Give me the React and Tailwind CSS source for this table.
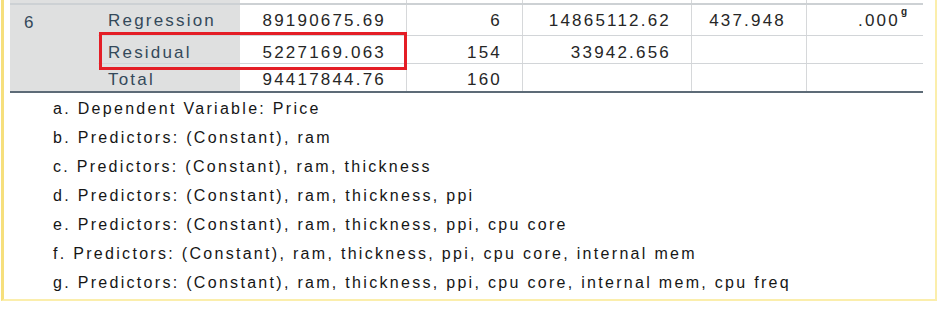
export default function App() {
    const cols = 'flex items-center justify-end pr-[20px] border-r border-[#d6d8da] text-[#262626]';
    const rows = [
        { label: 'Regression', ss: '89190675.69', df: '6', ms: '14865112.62', f: '437.948', sig: '.000', h: 'h-[31px]', pad: 'pt-[2px]' },
        { label: 'Residual', ss: '5227169.063', df: '154', ms: '33942.656', f: '', sig: '', h: 'h-[28px]', pad: 'pt-[6px]' },
        { label: 'Total', ss: '94417844.76', df: '160', ms: '', f: '', sig: '', h: 'h-[27px]', pad: 'pt-[4px]' },
    ];
    const notes = [
        'a. Dependent Variable: Price',
        'b. Predictors: (Constant), ram',
        'c. Predictors: (Constant), ram, thickness',
        'd. Predictors: (Constant), ram, thickness, ppi',
        'e. Predictors: (Constant), ram, thickness, ppi, cpu core',
        'f. Predictors: (Constant), ram, thickness, ppi, cpu core, internal mem',
        'g. Predictors: (Constant), ram, thickness, ppi, cpu core, internal mem, cpu freq',
    ];

    return (
        <div className="w-[939px] h-[316px] bg-white" style={{ fontFamily: '"Liberation Sans", Arial, sans-serif' }}>
            <div className="ml-[1px] w-[936px] h-[301px] border-l-[3px] border-r-2 border-b-2 border-l-[#f6df7c] border-r-[#fbeeac] border-b-[#fbeeac]">
                <div className="relative ml-[6px] w-[913px] text-[17px] tracking-[2.2px]">
                    {/* stub of the row above */}
                    <div className="flex h-[5px] border-b-2 border-[#cdd1d4]">
                        <div className="w-[230px] bg-[#dfe0e0]" />
                        <div className="w-[167px] border-r border-[#d6d8da]" />
                        <div className="w-[116px] border-r border-[#d6d8da]" />
                        <div className="w-[169px] border-r border-[#d6d8da]" />
                        <div className="w-[115px] border-r border-[#d6d8da]" />
                        <div className="w-[116px]" />
                    </div>

                    <div className="flex">
                        <div className="w-[88px] bg-[#dfe0e0] pl-[14px] pt-[5px] text-[#34495a]">6</div>
                        <div className="flex-1">
                            {rows.map((r, i) => (
                                <div key={r.label} className={`flex ${r.h} ${i < 2 ? 'border-b border-[#d2d5d8]' : ''}`}>
                                    <div className={`w-[142px] bg-[#dfe0e0] flex items-center pl-[10px] text-[#34495a] ${r.pad}`}>{r.label}</div>
                                    <div className={`w-[167px] ${cols} ${r.pad}`}>{r.ss}</div>
                                    <div className={`w-[116px] ${cols} ${r.pad}`}>{r.df}</div>
                                    <div className={`w-[169px] ${cols} ${r.pad}`}>{r.ms}</div>
                                    <div className={`w-[115px] ${cols} ${r.pad}`}>{r.f}</div>
                                    <div className={`w-[116px] flex items-center justify-end pr-[16px] text-[#262626] ${r.pad}`}>
                                        {r.sig}
                                        {r.sig && <sup className="text-[10px] font-bold tracking-normal -mt-[8px] ml-[1px]">g</sup>}
                                    </div>
                                </div>
                            ))}
                        </div>
                    </div>
                    <div className="h-[2px] bg-[#5d6b77]" />

                    <div className="absolute left-[89px] top-[32px] w-[308px] h-[38px] border-[3px] border-[#e41e26]" />
                </div>

                <div className="pl-[49px] pt-[1px] text-[16px] tracking-[2.3px] text-[#161616]">
                    {notes.map((n) => (
                        <div key={n} className="h-[29px] leading-[29px]">{n}</div>
                    ))}
                </div>
            </div>
        </div>
    );
}
